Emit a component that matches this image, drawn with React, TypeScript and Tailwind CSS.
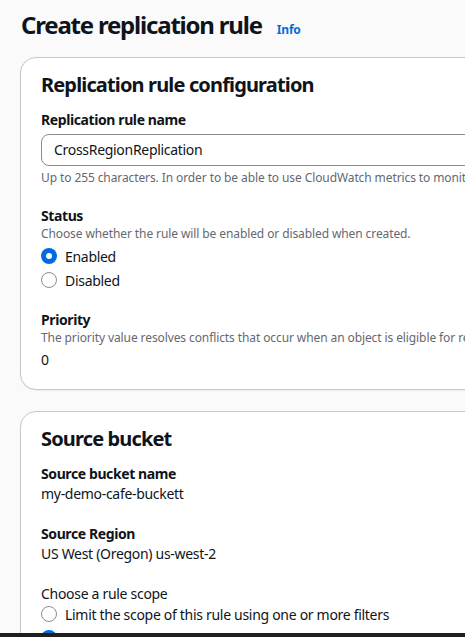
import React from 'react'

type RadioProps = {
  label: string
  checked?: boolean
}

function Radio({ label, checked = false }: RadioProps): JSX.Element {
  return (
    <label className="flex h-6 items-center gap-2">
      {checked ? (
        <span className="flex h-4 w-4 shrink-0 items-center justify-center rounded-full bg-[#006ce0]">
          <span className="h-[6px] w-[6px] rounded-full bg-white" />
        </span>
      ) : (
        <span className="h-4 w-4 shrink-0 rounded-full border-[1.5px] border-[#8c8c94] bg-white" />
      )}
      <span className="whitespace-nowrap text-[14px] tracking-[-0.3px] text-[#0f141a]">{label}</span>
    </label>
  )
}

function Card({ title, children }: { title: string; children: React.ReactNode }): JSX.Element {
  return (
    <section className="w-[480px] rounded-[16px] border border-[#c6c6cd] bg-white px-[20px] pt-[14px] pb-[19px] shadow-[0_1px_2px_rgba(0,7,22,0.05)]">
      <h2 className="text-[20px] font-bold leading-[26px] tracking-[-0.85px] text-[#0f141a]">{title}</h2>
      <div className="mt-[12px] flex flex-col">{children}</div>
    </section>
  )
}

const label = 'text-[14px] font-bold leading-[20px] tracking-[-0.4px]'
const body = 'text-[14px] leading-[20px] tracking-[-0.3px]'
const hint = 'whitespace-nowrap text-[12px] leading-[16px] tracking-[-0.1px] text-[#656871]'

export default function App(): JSX.Element {
  return (
    <div className="flex h-[637px] flex-col overflow-hidden bg-[#fafafb] font-['Noto_Sans',sans-serif] text-[#0f141a]">
      <div className="flex-1 overflow-hidden pl-[20px] pt-[7px]">
        <div className="flex items-baseline gap-[15px] pl-px">
          <h1 className="text-[24px] font-bold leading-[36px] tracking-[-1.2px]">Create replication rule</h1>
          <a className="text-[12px] font-bold tracking-[-0.2px] text-[#006ce0]">Info</a>
        </div>

        <div className="mt-[14px] flex flex-col gap-[21px]">
          <Card title="Replication rule configuration">
            <div className={label}>Replication rule name</div>
            <div className={`mt-[4px] flex h-[32px] items-center rounded-[8px] border border-[#8c8c94] bg-white px-[12px] ${body}`}>
              CrossRegionReplication
            </div>
            <div className={`mt-[4px] ${hint}`}>
              Up to 255 characters. In order to be able to use CloudWatch metrics to monitor the progress of your replication rule, the name must not exceed 255 characters.
            </div>

            <div className={`mt-[20px] ${label}`}>Status</div>
            <div className={hint}>Choose whether the rule will be enabled or disabled when created.</div>
            <div className="mt-[2px] flex flex-col">
              <Radio label="Enabled" checked />
              <Radio label="Disabled" />
            </div>

            <div className={`mt-[18px] ${label}`}>Priority</div>
            <div className={hint}>
              The priority value resolves conflicts that occur when an object is eligible for replication under multiple rules.
            </div>
            <div className={`mt-[4px] ${body}`}>0</div>
          </Card>

          <Card title="Source bucket">
            <div className={label}>Source bucket name</div>
            <div className={body}>my-demo-cafe-buckett</div>

            <div className={`mt-[20px] ${label}`}>Source Region</div>
            <div className={body}>US West (Oregon) us-west-2</div>

            <div className={`mt-[20px] ${body}`}>Choose a rule scope</div>
            <div className="-mt-[2px] flex flex-col">
              <Radio label="Limit the scope of this rule using one or more filters" />
              <Radio label="Apply to all objects in the bucket" checked />
            </div>
          </Card>
        </div>
      </div>
      <div className="h-[4px] shrink-0 bg-[#1f1f1f]" />
    </div>
  )
}
